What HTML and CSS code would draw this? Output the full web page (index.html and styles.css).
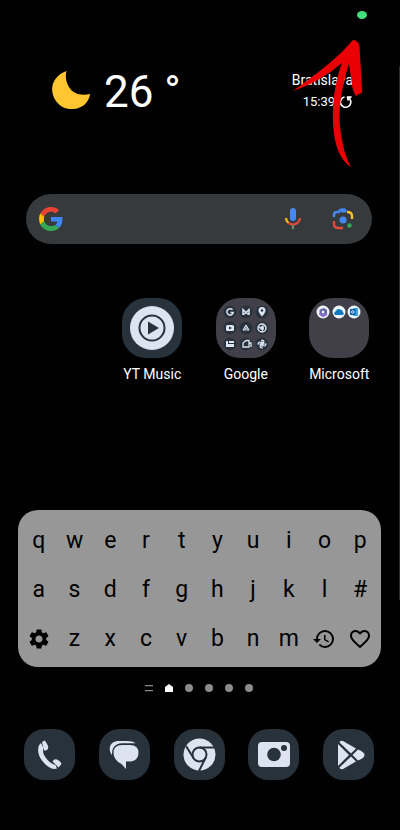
FILE: index.html
```html
<!DOCTYPE html>
<html lang="en">
<head>
	<meta charset="utf-8">
	<meta name="viewport" content="width=device-width, initial-scale=1">
	<title>Home screen</title>
	<link rel="stylesheet" href="styles.css">
</head>
<body>
<div class="home">

	<header class="weather">
		<svg class="moon" viewBox="0 0 38 38"><path d="M14.500 0C3 4-2 14 1 24C4 34 13 39 22 38C31 37 37 31 38 23C29 25 21 23 17 16C14 11 13 6 14.500 0Z" fill="#ffc62f"/></svg>
		<span class="temp">26 °</span>
		<div class="place">
			<span class="city">Bratislava</span>
			<span class="time">15:39
				<button class="plain" type="button" aria-label="Refresh">
					<svg width="14" height="14" viewBox="0 0 14 14" fill="none" stroke="#fff" stroke-width="1.600"><path d="M5.500 2A5.200 5.200 0 1 0 10.800 4"/><path d="M8 1.800H12.500L9 5.500Z" fill="#fff" stroke-width="1"/></svg>
				</button>
			</span>
		</div>
	</header>

	<form class="search">
		<svg width="24" height="24" viewBox="0 0 48 48">
			<path fill="#ea4335" d="M24 9.500c3.500 0 6.700 1.200 9.200 3.600l6.900-6.900C35.900 2.400 30.500 0 24 0 14.600 0 6.500 5.400 2.600 13.200l8 6.200C12.400 13.700 17.700 9.500 24 9.500z"/>
			<path fill="#4285f4" d="M47 24.600c0-1.600-.2-3.100-.4-4.600H24v9h12.900c-.6 3-2.200 5.500-4.700 7.200l7.700 6C44.400 38 47 31.800 47 24.600z"/>
			<path fill="#fbbc05" d="M10.500 28.600c-.5-1.500-.8-3-.8-4.600s.3-3.100.8-4.600l-8-6.200C.9 16.500 0 20.100 0 24s.9 7.500 2.600 10.800z"/>
			<path fill="#34a853" d="M24 48c6.500 0 11.900-2.100 15.900-5.800l-7.700-6c-2.200 1.500-4.900 2.300-8.200 2.300-6.300 0-11.600-4.200-13.500-9.900l-8 6.200C6.500 42.600 14.600 48 24 48z"/>
		</svg>
		<input class="query" type="text" aria-label="Search">
		<button class="plain" type="button" aria-label="Voice search">
			<svg width="18" height="24" viewBox="0 0 18 24" fill="none" stroke-width="2.200">
				<rect x="6" y="1" width="6" height="13" rx="3" fill="#4688f1"/>
				<path d="M2 11Q2 14 4.500 16" stroke="#fbbc05"/>
				<path d="M4.500 16Q9 19 13.500 16Q16 14 16 11" stroke="#e2493b"/>
				<path d="M9 18V22" stroke="#6b8f62"/>
			</svg>
		</button>
		<button class="plain" type="button" aria-label="Search with camera">
			<svg width="22" height="22" viewBox="0 0 22 22" fill="none" stroke-width="2.400">
				<path d="M2 9V7Q2 4 5 4H7L8 2H13L14 4" stroke="#4688f1"/>
				<path d="M9 2.500H13" stroke="#4688f1" stroke-width="4"/>
				<path d="M15 4Q20 4 20 8V11" stroke="#fbc02d"/>
				<path d="M2 13V16Q2 20 6 20H11" stroke="#e2493b"/>
				<circle cx="11" cy="12" r="3.500" fill="#4688f1"/>
				<circle cx="17.500" cy="17.500" r="2.200" fill="#34a853"/>
			</svg>
		</button>
	</form>

	<nav class="apps">
		<a class="app ytmusic" href="#">
			<svg class="tile" viewBox="0 0 60 60">
				<circle cx="30" cy="30" r="22" fill="#dde3f1"/>
				<circle cx="30" cy="30" r="12.500" fill="none" stroke="#28323b" stroke-width="2"/>
				<path d="M26 23.500V36.500L37 30Z" fill="#28323b"/>
			</svg>
			YT Music
		</a>
		<a class="app" href="#">
			<svg class="tile folder" viewBox="0 0 60 60">
				<g fill="#29323b">
					<circle cx="14" cy="14" r="6.500"/><circle cx="30" cy="14" r="6.500"/><circle cx="46" cy="14" r="6.500"/>
					<circle cx="14" cy="30" r="6.500"/><circle cx="30" cy="30" r="6.500"/><circle cx="46" cy="30" r="6.500"/>
					<circle cx="14" cy="46" r="6.500"/><circle cx="30" cy="46" r="6.500"/><circle cx="46" cy="46" r="6.500"/>
				</g>
				<g fill="none" stroke="#dde3f1" stroke-width="1.500">
					<path d="M16.500 11.800A3.200 3.200 0 1 0 17.200 14.500H14.500"/>
					<path d="M27 17V11.500L30 14.500L33 11.500V17M27.500 16.500L30 14.500L32.500 16.500"/>
					<path d="M30 27L27 32H33ZM30 27V30M27 32L30 30L33 32" stroke-width="1"/>
					<path d="M27 49V45L30 42.500H33V49ZM33 45H35V49" stroke-width="1.300"/>
					<path d="M46 46V42Q50 43 46 46H50Q49 50 46 46V50Q42 49 46 46H42Q43 42 46 46" stroke-width="1.200"/>
					<circle cx="46" cy="30" r="4" stroke-width="1.500"/>
					<path d="M46 28H50M44.500 31L42.500 28M47.500 31L45.500 34" stroke-width="1"/>
				</g>
				<g fill="#dde3f1">
					<path d="M46 18.500Q42.500 14.500 42.500 12.500A3.500 3.500 0 0 1 49.500 12.500Q49.500 14.500 46 18.500Z"/>
					<rect x="10" y="27" width="8" height="6" rx="1.500"/>
					<path d="M10 43H12V46H18V49H10ZM13 43H18V45H13Z"/>
					<circle cx="46" cy="30" r="2"/>
				</g>
				<g fill="#29323b"><circle cx="46" cy="12.500" r="1.200"/><path d="M13 28.500V31.500L16 30Z"/></g>
			</svg>
			Google
		</a>
		<a class="app" href="#">
			<svg class="tile folder" viewBox="0 0 60 60">
				<g fill="#eef3fa"><circle cx="14" cy="14" r="6.500"/><circle cx="30" cy="14" r="6.500"/><circle cx="45" cy="14" r="6.500"/></g>
				<path d="M12 11L15 10L18 12V16L14 18L10.500 16V12Z" fill="#6264a7"/>
				<path d="M10.500 16L14 18L18 16" stroke="#8d6fd1" stroke-width="2" fill="none"/>
				<circle cx="14" cy="14" r="1.500" fill="#eef3fa"/>
				<path d="M26 17Q24 15 27 13Q28 10 31 11.500Q33 11 34 14Q36 17 33 17Z" fill="#0f78bd"/>
				<path d="M44 10H49V18H44Z" fill="#3ba3df"/>
				<path d="M41 11H46.500V17H41Z" fill="#0a66b0"/>
				<circle cx="43.800" cy="14" r="1.300" fill="none" stroke="#fff" stroke-width=".8"/>
			</svg>
			Microsoft
		</a>
	</nav>

	<div class="keyboard">
		<button type="button">q</button><button type="button">w</button><button type="button">e</button><button type="button">r</button><button type="button">t</button>
		<button type="button">y</button><button type="button">u</button><button type="button">i</button><button type="button">o</button><button type="button">p</button>
		<button type="button">a</button><button type="button">s</button><button type="button">d</button><button type="button">f</button><button type="button">g</button>
		<button type="button">h</button><button type="button">j</button><button type="button">k</button><button type="button">l</button><button type="button">#</button>
		<button type="button" aria-label="Settings">
			<svg width="24" height="24" viewBox="0 0 24 24"><path d="M19.140 12.940c.04-.3.06-.61.06-.94 0-.32-.02-.64-.07-.94l2.030-1.580c.18-.14.23-.41.12-.61l-1.920-3.320c-.12-.22-.37-.29-.59-.22l-2.390.96c-.5-.38-1.030-.7-1.620-.94l-.36-2.540c-.04-.24-.24-.41-.48-.41h-3.840c-.24 0-.43.17-.47.41l-.36 2.540c-.59.24-1.130.57-1.620.94l-2.390-.96c-.22-.08-.47 0-.59.22L2.740 8.870c-.12.21-.08.47.12.61l2.030 1.580c-.05.3-.09.63-.09.94s.02.64.07.94l-2.030 1.580c-.18.14-.23.41-.12.61l1.920 3.320c.12.22.37.29.59.22l2.390-.96c.5.38 1.030.7 1.620.94l.36 2.540c.05.24.24.41.48.41h3.840c.24 0 .44-.17.47-.41l.36-2.540c.59-.24 1.130-.56 1.620-.94l2.390.96c.22.08.47 0 .59-.22l1.920-3.320c.12-.22.07-.47-.12-.61zM12 15.600c-1.980 0-3.600-1.620-3.600-3.600s1.620-3.600 3.600-3.600 3.600 1.620 3.600 3.600-1.620 3.600-3.600 3.600z"/></svg>
		</button>
		<button type="button">z</button><button type="button">x</button><button type="button">c</button><button type="button">v</button>
		<button type="button">b</button><button type="button">n</button><button type="button">m</button>
		<button type="button" aria-label="History">
			<svg width="24" height="24" viewBox="0 0 24 24"><path d="M13 3a9 9 0 0 0-9 9H1l3.890 3.890.07.14L9 12H6c0-3.870 3.130-7 7-7s7 3.130 7 7-3.130 7-7 7c-1.930 0-3.680-.79-4.940-2.060l-1.420 1.420A8.950 8.950 0 0 0 13 21a9 9 0 0 0 0-18zm-1 5v5l4.280 2.540.72-1.210-3.500-2.080V8z"/></svg>
		</button>
		<button type="button" aria-label="Favourites">
			<svg width="24" height="24" viewBox="0 0 24 24"><path d="M16.500 3c-1.740 0-3.410.81-4.500 2.090C10.910 3.810 9.240 3 7.500 3 4.420 3 2 5.420 2 8.500c0 3.780 3.400 6.860 8.550 11.540L12 21.350l1.450-1.320C18.600 15.360 22 12.280 22 8.500 22 5.420 19.580 3 16.500 3zm-4.400 15.550l-.1.100-.1-.1C7.140 14.240 4 11.390 4 8.500 4 6.500 5.500 5 7.500 5c1.540 0 3.040.99 3.570 2.360h1.870C13.460 5.990 14.960 5 16.500 5c2 0 3.500 1.500 3.500 3.500 0 2.890-3.140 5.740-7.900 10.050z"/></svg>
		</button>
	</div>

	<div class="pages">
		<svg width="8" height="8" viewBox="0 0 8 8" fill="#8b8b8b"><path d="M0 1H8V2.300H0ZM0 6H8V7.300H0Z"/></svg>
		<svg width="8" height="8" viewBox="0 0 8 8" fill="#fff"><path d="M4 0L8 3V8H0V3Z"/></svg>
		<span class="dot"></span>
		<span class="dot"></span>
		<span class="dot"></span>
		<span class="dot"></span>
	</div>

	<nav class="dock">
		<a href="#" aria-label="Phone">
			<svg class="tile" viewBox="0 0 51 51" fill="#dde3f1">
				<path d="M17 14C13 17 13 25 18 31.500C23 38 28 41 33 39.500L31.500 36C28 35 25 33 22 29C19 25 18.500 22 19.500 19Z"/>
				<path d="M18 13L20.500 11.500Q22 12.500 24 17Q25 20 22 21.500L20 21.500Z"/>
				<path d="M28.500 32.500Q30 29.500 33 30.500Q37 32.500 37.500 35L34.500 38.500Z"/>
			</svg>
		</a>
		<a href="#" aria-label="Messages">
			<svg class="tile" viewBox="0 0 51 51" fill="#dde3f1">
				<path d="M13 26C9 21 10 12 20 12H28Q34 12 36.500 14.300H23Q12.500 15 13 26Z"/>
				<path d="M23 16H31Q39.500 16 39.500 24Q39.500 31 32 32.500H27V40L22.500 35Q14.500 31 14.500 24Q14.500 16 23 16Z"/>
			</svg>
		</a>
		<a href="#" aria-label="Chrome">
			<svg class="tile" viewBox="0 0 51 51">
				<circle cx="25.500" cy="25.500" r="16" fill="#dde3f1"/>
				<g fill="none" stroke="#28323b" stroke-width="2">
					<circle cx="25.500" cy="25.500" r="7"/>
					<path d="M25.500 18.500H40M19.500 29L12 17M31.500 29L25 42"/>
				</g>
			</svg>
		</a>
		<a href="#" aria-label="Camera">
			<svg class="tile" viewBox="0 0 51 51">
				<rect x="10" y="13" width="32" height="25" rx="4" fill="#dde3f1"/>
				<circle cx="26" cy="25.500" r="6.800" fill="#28323b"/>
				<circle cx="36" cy="19" r="3" fill="#28323b"/>
			</svg>
		</a>
		<a href="#" aria-label="Play Store">
			<svg class="tile" viewBox="0 0 51 51" fill="#dde3f1">
				<path d="M15 15L26 26L15 37Z"/>
				<path d="M16.500 13.500Q17 11 20 12L33 19.500L28 24.500Z"/>
				<path d="M29.500 26L35 20.500Q41.500 23 41.500 26Q41.500 29 35 31.500Z"/>
				<path d="M28 27.500L33 32.500L20 40Q17 41 16.500 38.500Z"/>
			</svg>
		</a>
	</nav>

	<!-- drawn over the screen -->
	<span class="recording"></span>
	<span class="edge"></span>
	<svg class="arrow" width="80" height="130" viewBox="0 0 80 130" fill="#ea0004"><path d="M63 0Q68 0 69.500 6L72 50Q73 53 69 54L66 56Q63 52 62 45L59 24C52 44 48 70 50 86C52 104 55 116 61 127C52 122 46 109 44 94C41 70 44 44 52 23Q30 42 3 51Q34 29 52 12Z"/></svg>

</div>
</body>
</html>
```
FILE: styles.css
```css
* {
	box-sizing: border-box;
}
body {
	margin: 0;
	background: #020102;
	color: #fff;
	font-family: Roboto, "Liberation Sans", sans-serif;
}
.home {
	position: relative;
	min-height: 100vh;
	padding-top: 66px;
}
button {
	padding: 0;
	border: none;
	background: none;
	color: inherit;
	font: inherit;
}
svg { display: block; }

.weather {
	display: flex;
	align-items: center;
	height: 48px;
	margin: 0 47px 0 52px;
}
.moon {
	width: 38px;
	height: 38px;
}
.temp {
	margin-left: 14px;
	padding-top: 4px;
	font-size: 44px;
	line-height: 48px;
}
.place {
	display: flex;
	flex-direction: column;
	align-items: flex-end;
	margin-left: auto;
	padding-top: 2px;
}
.city {
	font-size: 14px;
	line-height: 21px;
}
.time {
	display: flex;
	align-items: center;
	gap: 4px;
	font-size: 13px;
	line-height: 21px;
}

.search {
	display: flex;
	align-items: center;
	height: 50px;
	margin: 80px 28px 0 26px;
	padding: 0 18px 0 13px;
	border-radius: 25px;
	background: #373a3c;
}
.query {
	flex: 1;
	min-width: 0;
	height: 50px;
	padding: 0 12px;
	border: none;
	outline: none;
	background: none;
	color: #fff;
	font: inherit;
}
.search .plain + .plain { margin-left: 30px; }

.tile {
	border-radius: 40%;
	background: #28323b;
}
.folder { background: #413f48; }

.apps {
	display: grid;
	grid-template-columns: repeat(4, 1fr);
	margin: 54px 14px 0 12px;
}
.app {
	display: flex;
	flex-direction: column;
	align-items: center;
	gap: 6px;
	color: #fff;
	font-size: 14px;
	line-height: 20px;
	text-decoration: none;
}
.app .tile {
	width: 60px;
	height: 60px;
}
.ytmusic { grid-column: 2; }

.keyboard {
	display: grid;
	grid-template-columns: repeat(10, 1fr);
	grid-auto-rows: 49px;
	margin: 126px 19px 0 18px;
	padding: 6px 3px 4px;
	border-radius: 20px;
	background: #979797;
	color: #000;
	font-size: 23px;
}
.keyboard button {
	display: flex;
	align-items: center;
	justify-content: center;
}

.pages {
	display: flex;
	justify-content: center;
	gap: 12px;
	margin-top: 17px;
	padding-right: 2px;
}
.dot {
	width: 8px;
	height: 8px;
	border-radius: 50%;
	background: #8b8b8b;
}

.dock {
	display: flex;
	justify-content: space-between;
	margin: 37px 26px 0 24px;
}
.dock .tile {
	width: 51px;
	height: 51px;
}

.recording {
	position: absolute;
	top: 11px;
	right: 33px;
	width: 10px;
	height: 8px;
	border-radius: 50%;
	background: #43df7c;
}
.edge {
	position: absolute;
	top: 66px;
	right: 0;
	width: 1px;
	height: 534px;
	background: #2c2c2b;
}
.arrow {
	position: absolute;
	top: 40px;
	right: 30px;
	pointer-events: none;
}
```
